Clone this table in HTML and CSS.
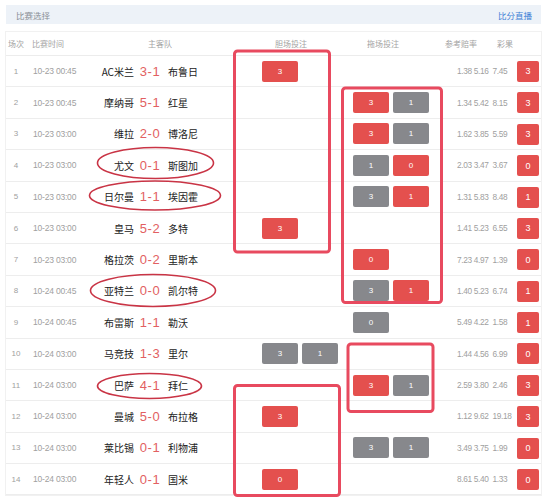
FILE: index.html
```html
<!DOCTYPE html>
<html lang="zh">
<head>
<meta charset="utf-8">
<link rel="stylesheet" href="styles.css">
</head>
<body>
<div class="page">
  <div class="topbar"><span class="title">比赛选择</span><span class="live">比分直播</span></div>
  <div class="table">
    <div class="thead">
      <span>场次</span><span>比赛时间</span><span>主客队</span><span>胆场投注</span><span>拖场投注</span><span>参考赔率</span><span>彩果</span>
    </div>
    <div class="row"><span class="no">1</span><span class="time">10-23 00:45</span><span class="home">AC米兰</span><span class="score">3-1</span><span class="away">布鲁日</span><span class="dan"><i class="btn red">3</i></span><span class="tuo"></span><span class="odds"><b>1.38</b><b>5.16</b><b class="o3">7.45</b></span><span class="res"><i class="rb">3</i></span></div>
    <div class="row"><span class="no">2</span><span class="time">10-23 00:45</span><span class="home">摩纳哥</span><span class="score">5-1</span><span class="away">红星</span><span class="dan"></span><span class="tuo"><i class="btn red">3</i><i class="btn grey">1</i></span><span class="odds"><b>1.34</b><b>5.42</b><b class="o3">8.15</b></span><span class="res"><i class="rb">3</i></span></div>
    <div class="row"><span class="no">3</span><span class="time">10-23 03:00</span><span class="home">维拉</span><span class="score">2-0</span><span class="away">博洛尼</span><span class="dan"></span><span class="tuo"><i class="btn red">3</i><i class="btn grey">1</i></span><span class="odds"><b>1.62</b><b>3.85</b><b class="o3">5.59</b></span><span class="res"><i class="rb">3</i></span></div>
    <div class="row"><span class="no">4</span><span class="time">10-23 03:00</span><span class="home">尤文</span><span class="score">0-1</span><span class="away">斯图加</span><span class="dan"></span><span class="tuo"><i class="btn grey">1</i><i class="btn red">0</i></span><span class="odds"><b>2.03</b><b>3.47</b><b class="o3">3.67</b></span><span class="res"><i class="rb">0</i></span></div>
    <div class="row"><span class="no">5</span><span class="time">10-23 03:00</span><span class="home">日尔曼</span><span class="score">1-1</span><span class="away">埃因霍</span><span class="dan"></span><span class="tuo"><i class="btn grey">3</i><i class="btn red">1</i></span><span class="odds"><b>1.31</b><b>5.83</b><b class="o3">8.48</b></span><span class="res"><i class="rb">1</i></span></div>
    <div class="row"><span class="no">6</span><span class="time">10-23 03:00</span><span class="home">皇马</span><span class="score">5-2</span><span class="away">多特</span><span class="dan"><i class="btn red">3</i></span><span class="tuo"></span><span class="odds"><b>1.41</b><b>5.23</b><b class="o3">6.55</b></span><span class="res"><i class="rb">3</i></span></div>
    <div class="row"><span class="no">7</span><span class="time">10-23 03:00</span><span class="home">格拉茨</span><span class="score">0-2</span><span class="away">里斯本</span><span class="dan"></span><span class="tuo"><i class="btn red">0</i></span><span class="odds"><b>7.23</b><b>4.97</b><b class="o3">1.39</b></span><span class="res"><i class="rb">0</i></span></div>
    <div class="row"><span class="no">8</span><span class="time">10-24 00:45</span><span class="home">亚特兰</span><span class="score">0-0</span><span class="away">凯尔特</span><span class="dan"></span><span class="tuo"><i class="btn grey">3</i><i class="btn red">1</i></span><span class="odds"><b>1.40</b><b>5.23</b><b class="o3">6.74</b></span><span class="res"><i class="rb">1</i></span></div>
    <div class="row"><span class="no">9</span><span class="time">10-24 00:45</span><span class="home">布雷斯</span><span class="score">1-1</span><span class="away">勒沃</span><span class="dan"></span><span class="tuo"><i class="btn grey">0</i></span><span class="odds"><b>5.49</b><b>4.22</b><b class="o3">1.58</b></span><span class="res"><i class="rb">1</i></span></div>
    <div class="row"><span class="no">10</span><span class="time">10-24 03:00</span><span class="home">马竞技</span><span class="score">1-3</span><span class="away">里尔</span><span class="dan"><i class="btn grey">3</i><i class="btn grey">1</i></span><span class="tuo"></span><span class="odds"><b>1.44</b><b>4.56</b><b class="o3">6.99</b></span><span class="res"><i class="rb">0</i></span></div>
    <div class="row"><span class="no">11</span><span class="time">10-24 03:00</span><span class="home">巴萨</span><span class="score">4-1</span><span class="away">拜仁</span><span class="dan"></span><span class="tuo"><i class="btn red">3</i><i class="btn grey">1</i></span><span class="odds"><b>2.59</b><b>3.80</b><b class="o3">2.46</b></span><span class="res"><i class="rb">3</i></span></div>
    <div class="row"><span class="no">12</span><span class="time">10-24 03:00</span><span class="home">曼城</span><span class="score">5-0</span><span class="away">布拉格</span><span class="dan"><i class="btn red">3</i></span><span class="tuo"></span><span class="odds"><b>1.12</b><b>9.62</b><b class="o3">19.18</b></span><span class="res"><i class="rb">3</i></span></div>
    <div class="row"><span class="no">13</span><span class="time">10-24 03:00</span><span class="home">莱比锡</span><span class="score">0-1</span><span class="away">利物浦</span><span class="dan"></span><span class="tuo"><i class="btn grey">3</i><i class="btn grey">1</i></span><span class="odds"><b>3.49</b><b>3.75</b><b class="o3">1.99</b></span><span class="res"><i class="rb">0</i></span></div>
    <div class="row"><span class="no">14</span><span class="time">10-24 03:00</span><span class="home">年轻人</span><span class="score">0-1</span><span class="away">国米</span><span class="dan"><i class="btn red">0</i></span><span class="tuo"></span><span class="odds"><b>8.61</b><b>5.40</b><b class="o3">1.33</b></span><span class="res"><i class="rb">0</i></span></div>
  </div>
  <svg class="marks" width="547" height="500" viewBox="0 0 547 500">
    <g class="box">
      <rect x="234.5" y="51" width="95" height="201" rx="3"/>
      <rect x="342.5" y="88" width="99" height="214.5" rx="3"/>
      <rect x="348" y="344" width="85" height="67.5" rx="3"/>
      <rect x="234.5" y="385.5" width="105" height="110" rx="3"/>
    </g>
    <g class="ring">
      <ellipse cx="155.5" cy="163" rx="58" ry="15.5"/>
      <ellipse cx="155" cy="195.5" rx="65.5" ry="14.5"/>
      <ellipse cx="153" cy="290.5" rx="62.5" ry="16"/>
      <ellipse cx="149.5" cy="386" rx="52" ry="12.5"/>
    </g>
  </svg>
</div>
</body>
</html>
```
FILE: styles.css
```css
* { box-sizing: border-box; }
html, body { margin: 0; padding: 0; background: #fff; }
body {
  font-family: "Liberation Sans", "Noto Sans CJK SC", sans-serif;
  color: #333;
}
.page {
  position: relative;
  width: 547px;
  height: 500px;
  padding: 5px 6px 0;
  overflow: hidden;
}
.topbar {
  height: 19px;
  background: #edf2f8;
  display: flex;
  justify-content: space-between;
  align-items: center;
  padding: 0 9px 0 10px;
  font-family: "Noto Sans CJK SC", sans-serif;
  font-size: 8.5px;
}
.topbar .title { color: #8a8f96; }
.topbar .live { color: #3d7fd6; }
.table {
  margin-top: 8px;
  width: 535px;
  box-shadow: 0 0 0 1px #f1f1f1;
}
.thead {
  height: 24px;
  display: grid;
  grid-template-columns: 24px 116px 127px 92px 78px 52px auto;
  align-items: center;
  padding-left: 2px;
  border-bottom: 1px solid #ececec;
  font-family: "Noto Sans CJK SC", sans-serif;
  font-size: 8px;
  color: #a3a3a3;
}
.row {
  height: 31.4px;
  display: grid;
  grid-template-columns: 20px 66px 44px 28px 68px 113px 100px 70px 26px;
  align-items: center;
  border-bottom: 1px solid #ededed;
}
.no {
  text-align: center;
  font-size: 8px;
  color: #a0a0a0;
}
.time {
  padding-left: 7px;
  font-size: 8.5px;
  color: #a0a0a0;
  letter-spacing: -0.2px;
}
.home {
  text-align: right;
  padding-right: 2px;
  font-family: "Noto Sans CJK SC", sans-serif;
  font-size: 10px;
  color: #222;
}
.away {
  padding-left: 4px;
  font-family: "Noto Sans CJK SC", sans-serif;
  font-size: 10px;
  color: #222;
}
.score {
  text-align: center;
  font-family: "Liberation Sans", sans-serif;
  font-size: 13px;
  color: #e25f62;
  letter-spacing: 0.6px;
}
.dan, .tuo {
  display: flex;
  gap: 4px;
}
.dan { padding-left: 30px; }
.tuo { padding-left: 8px; }
.btn {
  display: inline-flex;
  width: 36px;
  height: 21px;
  align-items: center;
  justify-content: center;
  border-radius: 2px;
  font-style: normal;
  font-size: 8px;
  color: #fff;
}
.red { background: #e4504e; }
.grey { background: #87888c; }
.odds {
  padding-left: 12px;
  font-size: 8.3px;
  color: #a0a0a0;
  white-space: nowrap;
  letter-spacing: -0.35px;
}
.odds b { font-weight: normal; margin-right: 2px; }
.odds .o3 { margin-left: 2px; margin-right: 0; }
.res { padding-left: 2px; }
.rb {
  display: inline-flex;
  width: 22px;
  height: 21px;
  align-items: center;
  justify-content: center;
  border-radius: 2px;
  background: #e4504e;
  color: #fff;
  font-style: normal;
  font-size: 9px;
}
.marks {
  position: absolute;
  left: 0;
  top: 0;
  pointer-events: none;
}
.box rect {
  fill: none;
  stroke: #e84a5f;
  stroke-width: 3;
}
.ring ellipse {
  fill: none;
  stroke: #c93445;
  stroke-width: 1.6;
}
```
